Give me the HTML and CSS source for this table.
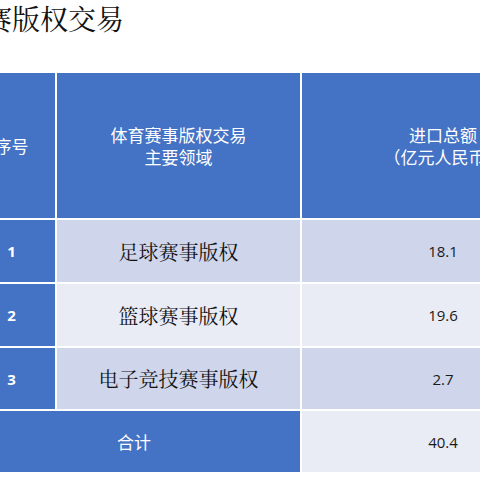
FILE: index.html
```html
<!DOCTYPE html>
<html lang="zh-CN">
<head>
<meta charset="utf-8">
<link rel="stylesheet" href="styles.css">
</head>
<body>
<div class="page">
  <h1 class="title">赛版权交易</h1>
  <div class="table">
    <div class="cell head">序号</div>
    <div class="cell head">体育赛事版权交易<br>主要领域</div>
    <div class="cell head">进口总额<br>（亿元人民币）</div>

    <div class="cell idx">1</div>
    <div class="cell name odd">足球赛事版权</div>
    <div class="cell num odd">18.1</div>

    <div class="cell idx">2</div>
    <div class="cell name even">篮球赛事版权</div>
    <div class="cell num even">19.6</div>

    <div class="cell idx">3</div>
    <div class="cell name odd">电子竞技赛事版权</div>
    <div class="cell num odd">2.7</div>

    <div class="cell total">合计</div>
    <div class="cell num even">40.4</div>
  </div>
</div>
</body>
</html>
```

FILE: styles.css
```css
html, body {
  margin: 0;
  padding: 0;
  background: #ffffff;
  overflow: hidden;
}
.page {
  width: 480px;
  height: 480px;
  overflow: hidden;
  position: relative;
}
.title {
  margin: 0 0 0 -16px;
  height: 73px;
  font-family: "Noto Serif CJK SC", "Noto Sans CJK SC", serif;
  font-weight: 400;
  font-size: 28px;
  line-height: 36px;
  color: #111111;
  white-space: nowrap;
}
.table {
  margin-left: -32px;
  width: 616px;
  display: grid;
  grid-template-columns: 87px 243px 282px;
  grid-template-rows: 145px 62px 62px 61px 61px;
  gap: 2px;
  background: #ffffff;
}
.cell {
  display: flex;
  align-items: center;
  justify-content: center;
  text-align: center;
}
.head {
  background: #4472c4;
  color: #ffffff;
  font-family: "Noto Sans CJK SC", sans-serif;
  font-size: 17px;
  line-height: 22px;
}
.idx {
  background: #4472c4;
  color: #ffffff;
  font-family: "Open Sans", sans-serif;
  font-weight: 700;
  font-size: 15px;
}
.name {
  font-family: "Noto Serif CJK SC", "Noto Sans CJK SC", serif;
  font-size: 20px;
  color: #111111;
}
.num {
  font-family: "Open Sans", sans-serif;
  font-size: 15px;
  color: #1a1a1a;
}
.odd {
  background: #cfd5ea;
}
.even {
  background: #e9ebf5;
}
.total {
  grid-column: 1 / 3;
  background: #4472c4;
  color: #ffffff;
  font-family: "Noto Sans CJK SC", sans-serif;
  font-size: 17px;
}
```
